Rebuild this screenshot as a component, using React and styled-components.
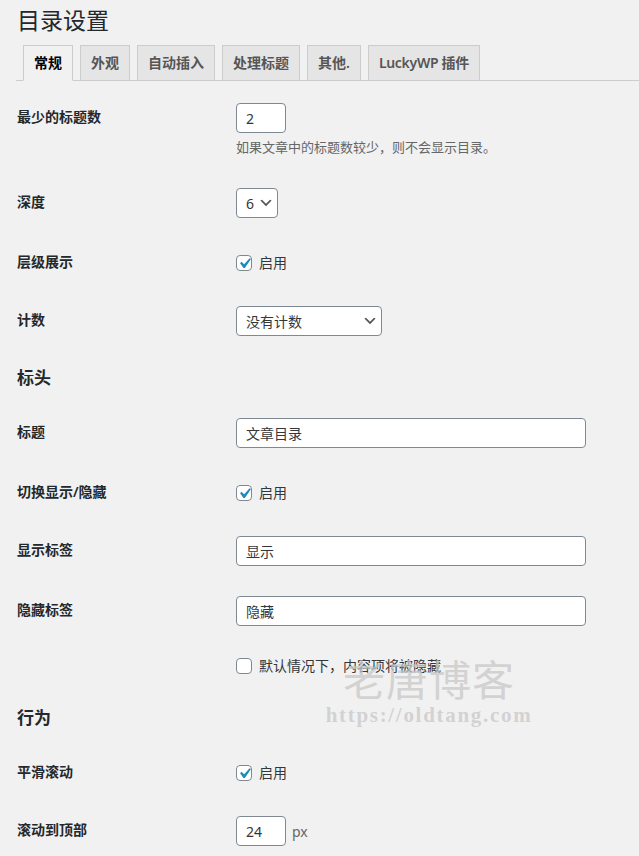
import React from 'react';
import styled, { createGlobalStyle } from 'styled-components';

const GlobalStyle = createGlobalStyle`
  html, body {
    margin: 0;
    padding: 0;
    background: #f1f1f1;
  }
  body {
    font-family: "Noto Sans", "Noto Sans CJK SC", sans-serif;
    color: #23282d;
    font-size: 14px;
  }
`;

const Wrap = styled.div`
  position: relative;
  padding-left: 16px;
  min-height: 856px;
  overflow: hidden;
`;

const Title = styled.h1`
  margin: 0;
  padding: 5px 0 0 1px;
  font-size: 23px;
  font-weight: 400;
  line-height: 30px;
  color: #23282d;
`;

const TabBar = styled.div`
  display: flex;
  margin-top: 10px;
  border-bottom: 1px solid #ccc;
`;

const Tab = styled.div`
  margin-left: 7px;
  margin-bottom: -1px;
  padding: 5px 10px;
  line-height: 24px;
  font-size: 14px;
  font-weight: 600;
  letter-spacing: ${(p) => (p.$tight ? '-0.3px' : '0')};
  border: 1px solid #ccc;
  border-bottom: 1px solid ${(p) => (p.$active ? '#f1f1f1' : '#ccc')};
  background: ${(p) => (p.$active ? '#f1f1f1' : '#e5e5e5')};
  color: ${(p) => (p.$active ? '#000' : '#555')};
  white-space: nowrap;
`;

const Section = styled.div`
  display: flex;
  flex-direction: column;
  padding-top: ${(p) => p.$top || 0}px;
`;

const Heading = styled.h3`
  margin: 0;
  padding: 16px 0 14px 1px;
  font-size: 17px;
  line-height: 22px;
  font-weight: 600;
  color: #23282d;
`;

const Row = styled.div`
  display: grid;
  grid-template-columns: 220px 1fr;
  align-items: start;
`;

const Label = styled.div`
  padding: 20px 10px 20px 1px;
  line-height: 18px;
  font-size: 14px;
  font-weight: 600;
  color: #23282d;
`;

const Field = styled.div`
  padding: ${(p) => (p.$check ? '20px 0 18px' : '15px 0')};
  display: flex;
  flex-direction: column;
  align-items: flex-start;
`;

const Inline = styled.div`
  display: flex;
  align-items: center;
  gap: 6px;
`;

const Input = styled.div`
  box-sizing: border-box;
  width: ${(p) => p.$w}px;
  height: 30px;
  padding: 0 9px;
  display: flex;
  align-items: center;
  background: #fff;
  border: 1px solid #7e8993;
  border-radius: 4px;
  font-size: 14px;
  color: #32373c;
`;

const Select = styled(Input)`
  justify-content: space-between;
  padding: 0 3px 0 9px;
`;

const Desc = styled.div`
  margin-top: 4px;
  line-height: 21px;
  font-size: 13px;
  color: #666;
`;

const CheckLine = styled.div`
  display: flex;
  align-items: center;
  gap: 7px;
  line-height: 20px;
  font-size: 14px;
  color: #32373c;
`;

const Box = styled.div`
  box-sizing: border-box;
  width: 16px;
  height: 16px;
  border: 1px solid #7e8993;
  border-radius: 4px;
  background: #fff;
  display: flex;
  align-items: center;
  justify-content: center;

  svg {
    flex: none;
    margin: -3px;
  }
`;

const Unit = styled.span`
  font-size: 14px;
  color: #666;
`;

const Watermark = styled.div`
  position: absolute;
  left: 316px;
  top: 652px;
  width: 226px;
  display: flex;
  flex-direction: column;
  align-items: center;
  pointer-events: none;
  color: rgba(200, 200, 200, 0.75);
`;

const WmName = styled.div`
  font-family: "Noto Sans CJK SC", sans-serif;
  font-size: 42px;
  line-height: 52px;
  letter-spacing: 1px;
`;

const WmUrl = styled.div`
  font-family: "Liberation Serif", serif;
  font-weight: 700;
  font-size: 21px;
  line-height: 22px;
  letter-spacing: 1.7px;
`;

const Chevron = () => (
  <svg width="16" height="16" viewBox="0 0 20 20">
    <path d="M5 6l5 5 5-5 2 1-7 7-7-7 2-1z" fill="#555" />
  </svg>
);

const Checkbox = ({ checked, children }) => (
  <CheckLine>
    <Box>
      {checked && (
        <svg width="21" height="21" viewBox="0 0 20 20">
          <path d="M14.83 4.89l1.34.94-5.81 8.38H9.02L5.78 9.67l1.34-1.25 2.57 2.4z" fill="#1e8cbe" />
        </svg>
      )}
    </Box>
    <span>{children}</span>
  </CheckLine>
);

const tabs = ['常规', '外观', '自动插入', '处理标题', '其他.', 'LuckyWP 插件'];

export default function App() {
  return (
    <>
      <GlobalStyle />
      <Wrap>
        <Title>目录设置</Title>
        <TabBar>
          {tabs.map((t, i) => (
            <Tab key={t} $active={i === 0} $tight={/[A-Za-z]/.test(t)}>{t}</Tab>
          ))}
        </TabBar>

        <Section $top={7}>
          <Row>
            <Label>最少的标题数</Label>
            <Field>
              <Input $w={50}>2</Input>
              <Desc>如果文章中的标题数较少，则不会显示目录。</Desc>
            </Field>
          </Row>
          <Row>
            <Label>深度</Label>
            <Field>
              <Select $w={42}>6<Chevron /></Select>
            </Field>
          </Row>
          <Row>
            <Label>层级展示</Label>
            <Field $check>
              <Checkbox checked>启用</Checkbox>
            </Field>
          </Row>
          <Row>
            <Label>计数</Label>
            <Field>
              <Select $w={146}>没有计数<Chevron /></Select>
            </Field>
          </Row>
        </Section>

        <Heading>标头</Heading>
        <Section>
          <Row>
            <Label>标题</Label>
            <Field>
              <Input $w={350}>文章目录</Input>
            </Field>
          </Row>
          <Row>
            <Label>切换显示/隐藏</Label>
            <Field $check>
              <Checkbox checked>启用</Checkbox>
            </Field>
          </Row>
          <Row>
            <Label>显示标签</Label>
            <Field>
              <Input $w={350}>显示</Input>
            </Field>
          </Row>
          <Row>
            <Label>隐藏标签</Label>
            <Field>
              <Input $w={350}>隐藏</Input>
            </Field>
          </Row>
          <Row>
            <div />
            <Field>
              <Checkbox>默认情况下，内容项将被隐藏</Checkbox>
            </Field>
          </Row>
        </Section>

        <Heading>行为</Heading>
        <Section>
          <Row>
            <Label>平滑滚动</Label>
            <Field $check>
              <Checkbox checked>启用</Checkbox>
            </Field>
          </Row>
          <Row>
            <Label>滚动到顶部</Label>
            <Field>
              <Inline>
                <Input $w={50}>24</Input>
                <Unit>px</Unit>
              </Inline>
            </Field>
          </Row>
        </Section>

        <Watermark>
          <WmName>老唐博客</WmName>
          <WmUrl>https://oldtang.com</WmUrl>
        </Watermark>
      </Wrap>
    </>
  );
}
